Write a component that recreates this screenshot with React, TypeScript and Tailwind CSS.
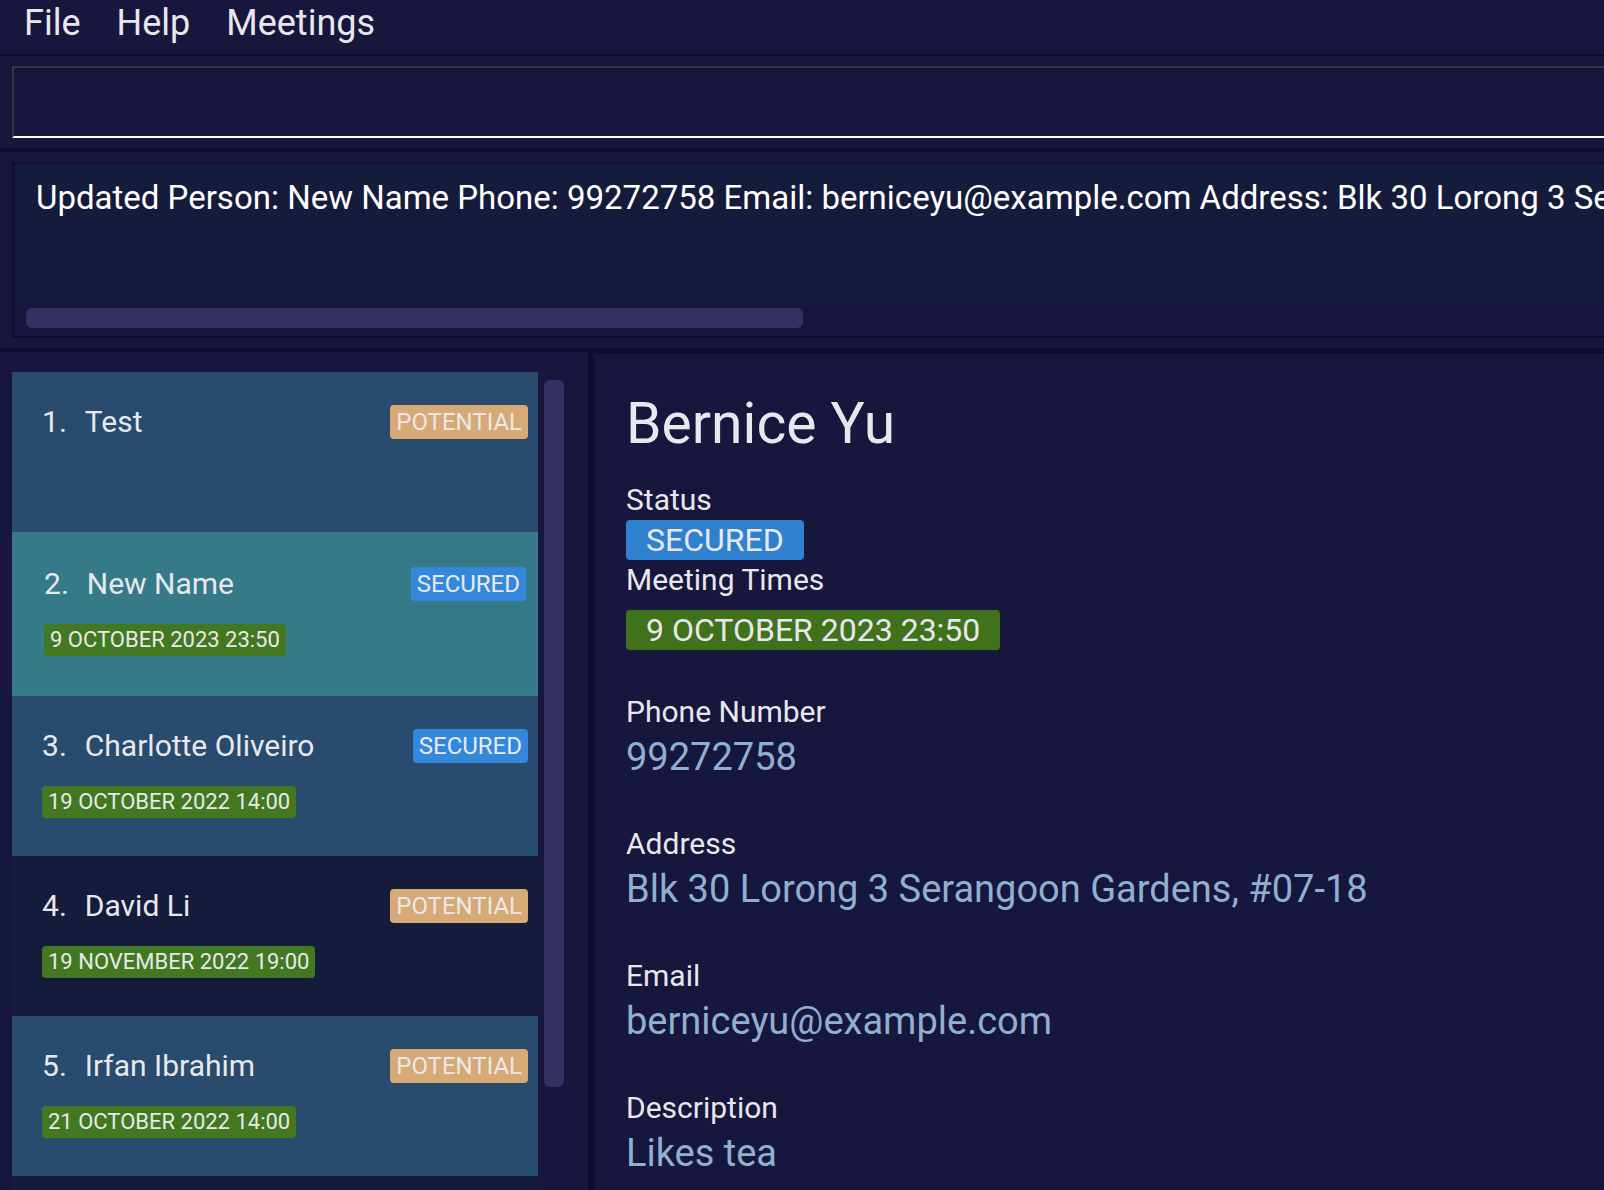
type Status = "POTENTIAL" | "SECURED";

type Person = {
  name: string;
  status: Status;
  meeting?: string;
};

const people: Person[] = [
  { name: "Test", status: "POTENTIAL" },
  { name: "New Name", status: "SECURED", meeting: "9 OCTOBER 2023 23:50" },
  { name: "Charlotte Oliveiro", status: "SECURED", meeting: "19 OCTOBER 2022 14:00" },
  { name: "David Li", status: "POTENTIAL", meeting: "19 NOVEMBER 2022 19:00" },
  { name: "Irfan Ibrahim", status: "POTENTIAL", meeting: "21 OCTOBER 2022 14:00" },
];

const fields = [
  { label: "Phone Number", value: "99272758" },
  { label: "Address", value: "Blk 30 Lorong 3 Serangoon Gardens, #07-18" },
  { label: "Email", value: "berniceyu@example.com" },
  { label: "Description", value: "Likes tea" },
];

const selectedIndex = 1;

function cellClass(index: number) {
  if (index === selectedIndex) return "min-h-[164px] border-2 border-[#3b7890] bg-[#357a86]";
  return index % 2 === 1 ? "min-h-40 bg-[#151b3b]" : "min-h-40 bg-[#284b6e]";
}

function PersonCell({ person, index }: { person: Person; index: number }) {
  return (
    <li>
      <button
        type="button"
        aria-pressed={index === selectedIndex}
        className={`flex w-full flex-col items-start justify-start gap-[23px] pt-[33px] pr-[10px] pl-[30px] text-left ${cellClass(index)}`}
      >
        <span className="flex w-full items-center justify-between">
          <span className="flex gap-[18px] text-[30px] leading-[34px]">
            <span>{index + 1}.</span>
            <span>{person.name}</span>
          </span>
          <span
            className={`rounded px-[6px] text-[24px] leading-[34px] ${
              person.status === "SECURED" ? "bg-[#3388db]" : "bg-[#d7a974]"
            }`}
          >
            {person.status}
          </span>
        </span>
        {person.meeting && (
          <span className="rounded bg-[#417820] px-[6px] text-[22px] leading-[32px]">
            {person.meeting}
          </span>
        )}
      </button>
    </li>
  );
}

export default function App() {
  return (
    <div className="flex h-screen flex-col overflow-hidden bg-[#17163d] font-[Roboto,Inter,sans-serif] text-[#e8e8ec]">
      <nav className="flex h-14 shrink-0 items-start gap-9 border-b-2 border-[#0f0e2e] pl-6 text-[36px] leading-[46px]">
        <button type="button">File</button>
        <button type="button">Help</button>
        <button type="button">Meetings</button>
      </nav>

      <div className="shrink-0 border-b-4 border-[#0f0e2e] py-[10px] pl-3">
        <input
          type="text"
          aria-label="Command"
          className="block h-[72px] w-full border-t-2 border-b-2 border-l-2 border-t-[#383838] border-b-white border-l-[#383838] bg-transparent px-5 text-[33px] text-white outline-none"
        />
      </div>

      <div className="shrink-0 border-b-4 border-[#0f0e2e] py-[10px] pl-3">
        <div className="border-y-2 border-l-2 border-[#0f0e2e] pt-0.5 pl-0.5">
          <p className="h-[136px] overflow-hidden bg-[#151b3b] pt-3 pl-5 text-[33px] leading-[40px] whitespace-nowrap text-white">
            Updated Person: New Name Phone: 99272758 Email: berniceyu@example.com Address: Blk 30
            Lorong 3 Serangoon Gardens, #07-18
          </p>
          <div className="pt-[6px] pb-2 pl-[10px]">
            <div className="h-5 w-[calc(50%-12px)] rounded-md bg-[#333162]" />
          </div>
        </div>
      </div>

      <div className="flex min-h-0 flex-1">
        <aside className="flex w-[588px] shrink-0 gap-[6px] pt-5 pl-3">
          <ul className="w-[526px] overflow-hidden bg-[#151b3b]">
            {people.map((person, index) => (
              <PersonCell key={person.name} person={person} index={index} />
            ))}
          </ul>
          <div className="mt-2 h-[707px] w-5 rounded-md bg-[#333162]" />
        </aside>

        <main className="min-w-0 flex-1 overflow-hidden border-t-2 border-l-[6px] border-[#0f0e2e] pt-[34px] pl-8">
          <h1 className="text-[57px] leading-[72px]">Bernice Yu</h1>
          <h2 className="mt-5 text-[30px] leading-[40px]">Status</h2>
          <div className="flex">
            <span className="rounded bg-[#3080d0] px-5 text-[32px] leading-[40px]">SECURED</span>
          </div>
          <h2 className="text-[30px] leading-[40px]">Meeting Times</h2>
          <div className="mt-[10px] flex">
            <span className="rounded bg-[#3f721b] px-5 text-[32px] leading-[40px]">
              9 OCTOBER 2023 23:50
            </span>
          </div>
          <dl className="mt-[42px] flex flex-col gap-[42px]">
            {fields.map((field) => (
              <div key={field.label}>
                <dt className="text-[30px] leading-[40px]">{field.label}</dt>
                <dd className="text-[38px] leading-[50px] text-[#8fb0cf]">{field.value}</dd>
              </div>
            ))}
          </dl>
        </main>
      </div>
    </div>
  );
}
